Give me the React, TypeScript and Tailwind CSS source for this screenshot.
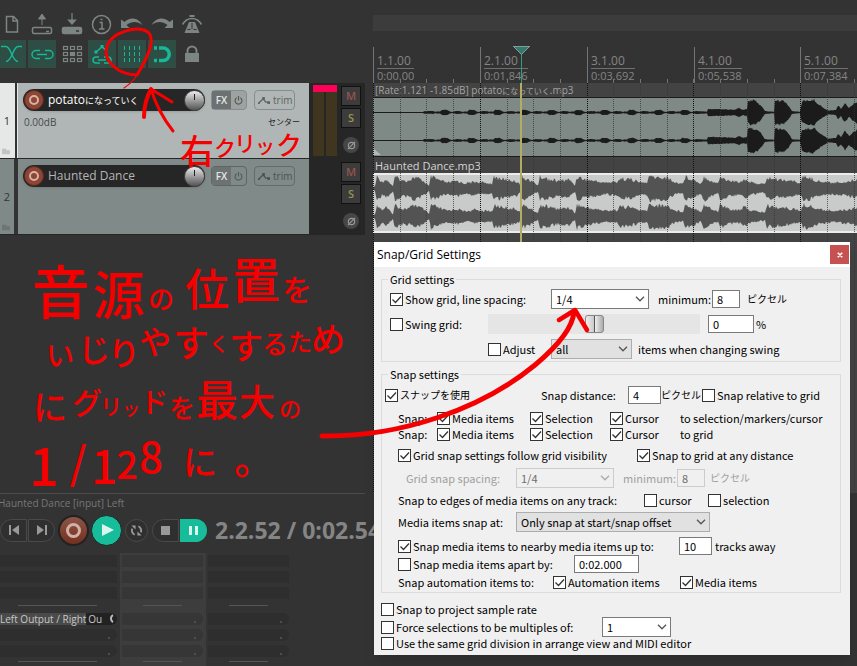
import React from "react";

const ui = "font-['Open_Sans','Noto_Sans_CJK_JP',sans-serif]";
const dlg = "font-['Noto_Sans_CJK_JP',sans-serif]";

/* ---------- waveforms ---------- */

type Pt = [number, number];

const noise = (n: number) => {
  const v = Math.sin(n * 12.9898) * 43758.5453;
  return v - Math.floor(v);
};

function envelope(points: Pt[], x: number) {
  for (let i = 1; i < points.length; i++) {
    const [x0, a0] = points[i - 1];
    const [x1, a1] = points[i];
    if (x <= x1) return a0 + ((a1 - a0) * (x - x0)) / Math.max(1, x1 - x0);
  }
  return points[points.length - 1][1];
}

function wave(points: Pt[], centre: number, rough: number, seed: number) {
  const top: string[] = [];
  const bottom: string[] = [];
  for (let x = 0; x <= 484; x++) {
    const a = envelope(points, x);
    const up = Math.max(0.5, a * (1 - rough * noise(x + seed)));
    const down = Math.max(0.5, a * (1 - rough * noise(x * 3 + seed)));
    top.push(`${x},${(centre - up).toFixed(1)}`);
    bottom.unshift(`${x},${(centre + down).toFixed(1)}`);
  }
  return [...top, ...bottom].join(" ");
}

const quiet: Pt[] = [[0, 0.5], [50, 0.5], [51, 1.5], [60, 1.5]];
for (let i = 0; i < 10; i++) {
  const c = 72 + Math.round(i * 26.7);
  quiet.push([c - 9, 0.6], [c - 8, 1.2], [c - 5, 1], [c - 3, 2.8], [c + 2, 2.8], [c + 5, 1], [c + 7, 0.6], [c + 11, 1.6], [c + 16, 1.4]);
}
const potatoPeaks: Pt[] = [
  ...quiet, [334, 1], [335, 4], [350, 3.6], [362, 3], [366, 5], [370, 3], [374, 4], [375, 12], [378, 14], [383, 12], [388, 8],
  [392, 1.5], [401, 0.8], [402, 13], [411, 13], [416, 7], [419, 1.5], [427, 0.8], [429, 12], [441, 14], [448, 7],
  [455, 2], [463, 3], [465, 8], [468, 4], [472, 11], [476, 5], [480, 9], [484, 12],
];
const dancePeaks: Pt[] = [
  [0, 1], [2, 3], [4, 14], [9, 8], [13, 11], [20, 3], [22, 14], [30, 9], [36, 10], [42, 14], [50, 9], [56, 3], [58, 14],
  [66, 10], [74, 7], [84, 9], [92, 6], [102, 8], [110, 7], [119, 6], [121, 13], [132, 11], [145, 8], [148, 4], [149, 14], [158, 9], [165, 4],
  [167, 14], [177, 11], [186, 9], [196, 11], [202, 4], [204, 14], [212, 11], [222, 9], [232, 7], [244, 8], [247, 12], [258, 11], [268, 7],
  [274, 7], [276, 14], [286, 13], [294, 13], [302, 7], [310, 6], [312, 14], [320, 11], [328, 6], [331, 14], [340, 8], [345, 6], [347, 14],
  [356, 9], [366, 8], [372, 11], [378, 7], [392, 5], [394, 13], [404, 11], [414, 10], [428, 7], [430, 14], [436, 13], [444, 9], [458, 7], [474, 8], [484, 11],
];

/* ---------- toolbar ---------- */

function Tool({ label, active, children }: { label: string; active?: boolean; children: React.ReactNode }) {
  return (
    <button
      aria-label={label}
      className={active ? "size-7 shrink-0 bg-[#2d4d45] text-[#18b795]" : "size-7 shrink-0 text-[#7d8583]"}
    >
      <svg viewBox="0 0 28 28" className="size-7" fill="none" stroke="currentColor" strokeWidth="1.5">
        {children}
      </svg>
    </button>
  );
}

const gridCells = [0, 1, 2].flatMap((r) => [0, 1, 2].map((c) => [c, r]));

function Toolbar() {
  return (
    <div className="-ml-0.5 flex flex-col gap-px pt-[11px]">
      <div className="flex gap-0.5">
        <Tool label="New project">
          <path d="M8.5 5.5h7l4 4v11.5h-11zM15 5.5v4.500h4.500" />
        </Tool>
        <Tool label="Open project">
          <rect x="4.500" y="16.500" width="19" height="6" rx="1.500" />
          <path d="M14 14V5M14 3l-3.500 5h7z" fill="currentColor" strokeWidth="1" />
          <path d="M18 20.500h3" />
        </Tool>
        <Tool label="Save project">
          <rect x="4.500" y="16.500" width="19" height="6" rx="1.500" fill="currentColor" />
          <path d="M14 2v7M14 13l-3.500-4h7z" fill="currentColor" strokeWidth="1.200" />
          <path d="M18 20h3" stroke="#333" />
        </Tool>
        <Tool label="Project settings">
          <circle cx="13.500" cy="13.500" r="9" />
          <path d="M11.500 11.500h2.500v6M11 18h5.500M12.500 8.500h2" />
        </Tool>
        <Tool label="Undo">
          <path d="M3 8.500v8.500h8.500l-3-3c5-4 11-4 16 0c-5-8-13-8-18-3z" fill="currentColor" stroke="none" />
        </Tool>
        <Tool label="Redo">
          <path d="M25 8.500v8.500h-8.500l3-3c-5-4-11-4-16 0c5-8 13-8 18-3z" fill="currentColor" stroke="none" />
        </Tool>
        <Tool label="Metronome">
          <path d="M11 11h6l4.500 11H6.500z" fill="currentColor" stroke="none" />
          <path d="M14 12v6M9.500 18.500h3M15.500 18.500h3" stroke="#333" strokeWidth="1" />
          <path d="M4.500 13.500Q8 7.500 14 7.500T23.500 13.500" />
          <path d="M11.500 5h5" strokeWidth="2" />
        </Tool>
      </div>
      <div className="flex gap-0.5">
        <Tool label="Crossfade" active>
          <path d="M3 6.500h5c5 0 6 15 12 15M24 6.500h-4c-5 0-6 15-12 15" />
        </Tool>
        <Tool label="Grouping" active>
          <path d="M12 10.500H8a4 4 0 0 0 0 8h4M17 10.500h4a4 4 0 0 1 0 8h-4M9 14.500h10" />
        </Tool>
        <Tool label="Ripple edit">
          {gridCells.map(([c, r]) => (
            <rect key={`${c}${r}`} x={5.5 + c * 7} y={6.5 + r * 6} width="4" height="3" fill={c === 1 && r === 1 ? "currentColor" : "none"} strokeWidth="1.200" />
          ))}
        </Tool>
        <Tool label="Envelopes move with items" active>
          <path d="M8 12l6-5l5 4M11 17H8a3 3 0 0 0 0 6h4M16 17h4a3 3 0 0 1 0 6h-4M10 20h8" />
          <path d="M12.500 5h3v3h-3zM6.500 10.500h3v3h-3z" fill="currentColor" stroke="none" />
        </Tool>
        <Tool label="Grid lines" active>
          <path d="M6.500 6v17M11.500 6v17M16.500 6v17M21.500 6v17" strokeWidth="1" strokeDasharray="4 2" />
        </Tool>
        <Tool label="Snap" active>
          <path d="M11 8h4a6 6 0 0 1 0 12.500h-4" strokeWidth="3.500" />
          <path d="M6 8h3M6 20.500h3" strokeWidth="3.500" />
        </Tool>
        <Tool label="Lock">
          <rect x="7" y="13" width="14" height="9" fill="currentColor" stroke="none" />
          <path d="M9.500 13v-2a4.500 4.500 0 0 1 9 0v2" strokeWidth="2" />
        </Tool>
      </div>
    </div>
  );
}

/* ---------- track panel ---------- */

function RecordDot() {
  return (
    <button aria-label="Record arm" className="flex size-5 items-center justify-center rounded-full border border-[#5a2a20] bg-[#8d4636]">
      <span className="size-2.5 rounded-full border-2 border-[#d9b1a6]" />
    </button>
  );
}

function Track({ n, name, selected }: { n: number; name: React.ReactNode; selected?: boolean }) {
  return (
    <div className="flex h-[75px]">
      <div className={`flex w-3.5 flex-col justify-between pt-[31px] pb-[3px] text-center text-[11px] leading-[14px] text-[#333] ${selected ? "bg-[#e6e8e8]" : "bg-[#7f8987]"}`}>
        <span>{n}</span>
        <svg viewBox="0 0 10 7" className="ml-0.5 h-[7px] w-2" fill={selected ? "#c2c4c4" : "#6d7674"}>
          <path d="M0 0h5l1 2h4v5H0z" />
        </svg>
      </div>
      <div className={`w-1 border-x bg-[#333] ${selected ? "border-[#e6e8e8]" : "border-[#333]"}`} />
      <div className={`flex min-w-0 flex-1 flex-col pt-1.5 pr-[9px] pl-[5px] ${selected ? "bg-[#b0b6b5]" : "bg-[#808a88]"}`}>
        <div className="flex items-center">
          <div className="flex h-[22px] w-[182px] items-center rounded-full bg-[#262626] pl-px shadow-sm">
            <RecordDot />
            <span className={`ml-1 flex-1 text-[12px] leading-4 whitespace-nowrap ${selected ? "text-white" : "text-[#b5b5b5]"}`}>{name}</span>
            <span className="flex size-[21px] justify-center rounded-full border border-[#444] bg-linear-to-b from-[#eee] to-[#555] pt-[3px]">
              <span className="h-1.5 w-px bg-[#222]" />
            </span>
          </div>
          <div className={`ml-1.5 flex h-5 w-9 rounded-sm border text-[10px] ${selected ? "border-[#858c8b] bg-[#9ca3a1]" : "border-[#5e6564]"}`}>
            <button className="w-[19px] bg-[#6b7271] font-semibold text-[#e4e6e6]">FX</button>
            <button aria-label="Bypass effects" className="flex flex-1 items-center justify-center text-[#555c5a]">
              <svg viewBox="0 0 10 10" className="size-[9px]" fill="none" stroke="currentColor" strokeWidth="1.300">
                <path d="M3 2a3.800 3.800 0 1 0 4 0M5 0v5" />
              </svg>
            </button>
          </div>
          <button className={`ml-[7px] flex h-5 w-[41px] items-center rounded-sm border pl-[3px] text-[10px] leading-4 ${selected ? "border-[#858c8b] text-[#5d6463]" : "border-[#636b69] text-[#4c5352]"}`}>
            <svg viewBox="0 0 14 10" className="mr-[3px] h-[9px] w-3 shrink-0" fill="none" stroke="currentColor" strokeWidth="1.500">
              <path d="M1 8l5-5l3 4h4" />
              <path d="M0 7h2v2H0zM5 1h3v3H5zM11 6h3v3h-3z" fill="currentColor" stroke="none" />
            </svg>
            trim
          </button>
        </div>
        {selected && (
          <div className="mt-[3px] flex justify-between pl-px text-[10px] leading-4 text-[#444b4a]">
            <span>0.00dB</span>
            <span className="text-[8px] text-[#222]">センター</span>
          </div>
        )}
      </div>
      <div className="flex w-14 bg-[#262626] pl-1">
        <div className="flex w-6 flex-col pt-0.5 pb-0.5">
          {selected && (
            <>
              <div className="h-[7px] bg-[#ff0059]" />
              <div className="flex flex-1 gap-0.5">
                <div className="flex-1 bg-[#40361f]" />
                <div className="flex-1 bg-[#40361f]" />
              </div>
            </>
          )}
        </div>
        <div className="ml-1 flex w-5 flex-col items-center pt-[3px]">
          <button className="h-5 w-5 border border-[#111] bg-[#3c3c3c] text-[11px] leading-4 font-semibold text-[#95534f]">M</button>
          <button className="mt-0.5 h-5 w-5 border border-[#111] bg-[#3c3c3c] text-[11px] leading-4 font-semibold text-[#98964c]">S</button>
          <button aria-label="Phase" className="mt-[9px] flex size-4 items-center justify-center rounded-full bg-[#464646] text-[#999]">
            <svg viewBox="0 0 10 10" className="size-[9px]" fill="none" stroke="currentColor" strokeWidth="1.300">
              <circle cx="5" cy="5" r="3.500" />
              <path d="M1 9l8-8" />
            </svg>
          </button>
        </div>
      </div>
    </div>
  );
}

/* ---------- arrange view ---------- */

const bars = [
  { bar: "1.1.00", time: "0:00.00", w: "w-[107px]" },
  { bar: "2.1.00", time: "0:01.846", w: "w-[107px]" },
  { bar: "3.1.00", time: "0:03.692", w: "w-[107px]" },
  { bar: "4.1.00", time: "0:05.538", w: "w-[106px]" },
  { bar: "5.1.00", time: "0:07.384", w: "w-[106px]" },
];
const beats = Array.from({ length: 20 }, (_, i) => Math.round(i * 26.7));

function Arrange() {
  return (
    <div className="relative flex min-w-0 flex-1 flex-col overflow-hidden bg-[#434343]">
      <div className="h-[15px] bg-[#333]" />
      <div className="h-4 bg-[#3c3c3c]" />
      <div className="flex h-[52px] bg-[#333] pt-4">
        {bars.map((b) => (
          <div key={b.bar} className={`h-9 shrink-0 border-l border-[#747474] pl-[3px] text-[#858585] ${b.w}`}>
            <div className="inline-flex flex-col pr-px">
              <span className="border-b border-[#6f6f6f] text-[12px] leading-[14px]">{b.bar}</span>
              <span className="text-[11px] leading-[14px]">{b.time}</span>
            </div>
          </div>
        ))}
      </div>
      <div className="h-[14px] pl-0.5 text-[10px] leading-[14px] whitespace-nowrap text-[#a2a2a2]">
        [Rate:1.121 -1.85dB] potato<span className="text-[8px]">になっていく</span>.mp3
      </div>
      <div className="h-[60px] border-y border-[#1c1c1c] bg-[#7f8a87]">
        <svg width="484" height="58" className="max-w-none">
          <path d="M0 57V50l8 7z" fill="#b4b9b8" />
          <polygon points={wave(potatoPeaks, 14.5, 0.2, 1)} fill="#1b1b1b" />
          <polygon points={wave(potatoPeaks, 42.5, 0.2, 7)} fill="#1b1b1b" />
        </svg>
      </div>
      <div className="h-4 pl-0.5 text-[11px] leading-[18px] whitespace-nowrap text-[#d4d4d4]">Haunted Dance.mp3</div>
      <div className="h-[60px] border-y-2 border-[#ececec] bg-[#c9cbcb]">
        <svg width="484" height="56" className="max-w-none">
          <polygon points={wave(dancePeaks, 13.5, 0.35, 3)} fill="#535353" />
          <polygon points={wave(dancePeaks, 41.5, 0.35, 11)} fill="#535353" />
        </svg>
      </div>
      <div className="flex-1" />
      <svg className="pointer-events-none absolute inset-0 h-full w-full" shapeRendering="crispEdges">
        {beats.map((x, i) => (
          <g key={x}>
            <line x1={x + 0.5} x2={x + 0.5} y1="79" y2="83" stroke="#747474" />
            <line x1={x + 0.5} x2={x + 0.5} y1="83" y2="100%" stroke={i % 4 === 0 ? "#111" : "#333"} strokeOpacity={i % 4 === 0 ? 1 : 0.75} strokeDasharray="1 1" />
          </g>
        ))}
        <path d="M148.500 54v29" stroke="#2f9c86" />
        <path d="M148 83v160" stroke="#b3ad62" strokeWidth="2" />
        <path d="M140.500 46.500h16l-8 8z" fill="#36786c" stroke="#7f9f99" />
      </svg>
    </div>
  );
}

/* ---------- transport and mixer ---------- */

function Transport() {
  const side = "flex h-[23px] w-[27px] shrink-0 items-center justify-center border border-[#4a4a4a] bg-[#2f2f2f] text-[#999]";
  return (
    <div className="flex h-[34px] items-center">
      <div className="flex items-center">
        <button aria-label="Go to start" className={`${side} rounded-l-full`}>
          <svg viewBox="0 0 12 10" className="h-2.5 w-3" fill="currentColor"><path d="M1 0h2v10H1zM11 0v10L4 5z" /></svg>
        </button>
        <button aria-label="Go to end" className={`${side} ml-px rounded-r-full`}>
          <svg viewBox="0 0 12 10" className="h-2.5 w-3" fill="currentColor"><path d="M9 0h2v10H9zM1 0v10l7-5z" /></svg>
        </button>
        <button aria-label="Record" className="ml-[3px] flex size-[31px] shrink-0 items-center justify-center rounded-full border-2 border-[#222] bg-linear-to-b from-[#8c5548] to-[#74301f]">
          <span className="size-[15px] rounded-full border-3 border-[#d3b0a6]" />
        </button>
        <button aria-label="Play" className="ml-0.5 flex size-[31px] shrink-0 items-center justify-center rounded-full border border-[#1e2a27] bg-[#17bd9a] text-[#d8f5ee]">
          <svg viewBox="0 0 12 12" className="ml-0.5 size-3" fill="currentColor"><path d="M0 0v12l12-6z" /></svg>
        </button>
        <button aria-label="Repeat" className="ml-[3px] flex size-[23px] shrink-0 items-center justify-center rounded-full border border-[#4a4a4a] bg-[#2f2f2f] text-[#999]">
          <svg viewBox="0 0 14 14" className="size-[13px]" fill="none" stroke="currentColor" strokeWidth="2">
            <path d="M5 11.600A5 5 0 0 1 2.400 5M9 2.400A5 5 0 0 1 11.600 9" />
            <path d="M6 1.500H1.500L6 6zM8 12.500h4.500L8 8z" fill="currentColor" stroke="none" />
          </svg>
        </button>
        <button aria-label="Stop" className={`${side} ml-1 rounded-l-full`}>
          <span className="size-[9px] bg-[#999]" />
        </button>
        <button aria-label="Pause" className="ml-px flex h-[23px] w-[27px] shrink-0 items-center justify-center gap-[3px] rounded-r-full bg-[#17bd9a]">
          <span className="h-[9px] w-[3px] bg-[#d8f5ee]" />
          <span className="h-[9px] w-[3px] bg-[#d8f5ee]" />
        </button>
      </div>
      <span className="ml-2 text-[23px] leading-8 font-bold whitespace-nowrap text-[#858585]">2.2.52 / 0:02.549</span>
    </div>
  );
}

function Strip({ wide, lit, output }: { wide?: boolean; lit?: boolean; output?: boolean }) {
  const slot = lit ? "bg-[#363636]" : "bg-[#2e2e2e]";
  const sends = [0, 1, 2];
  return (
    <div className={`flex flex-col pt-0.5 pr-[3px] ${wide ? "w-[120px]" : "w-[86px] pl-0.5"} ${lit ? "bg-[#3d3d3d]" : ""}`}>
      <div className="flex flex-col gap-1">
        {sends.map((i) => (
          <div key={i} className={`h-3 ${slot}`} />
        ))}
      </div>
      <div className={`mt-1.5 h-px bg-[#555] ${wide ? "mr-5 ml-[18px]" : "mx-[21px]"}`} />
      <div className="mt-[7px] flex flex-col gap-1">
        {sends.map((i) =>
          output && i === 0 ? (
            <div key={i} className="flex h-3 items-center rounded-r-full bg-[#222] text-[10px] leading-3 whitespace-nowrap text-[#c8c8c8]">
              <span className="bg-[#4a4a4a]">Left Output / Right</span>
              <span className="ml-0.5">Ou</span>
              <svg viewBox="0 0 8 10" className="ml-[5px] h-2.5 w-2" fill="none" stroke="#bbb" strokeWidth="2"><path d="M6 1a4 4 0 0 0 0 7" /></svg>
            </div>
          ) : (
            <div key={i} className={`flex h-3 items-end justify-end rounded-r-full pr-[7px] pb-0.5 ${slot}`}>
              <span className="size-0.5 bg-[#4d4d4d]" />
            </div>
          ),
        )}
      </div>
      <div className={`mt-1 mb-1 h-px bg-[#555] ${wide ? "mr-5 ml-[18px]" : "mx-[21px]"}`} />
    </div>
  );
}

/* ---------- dialog ---------- */

function Check({ label, checked, w = "", small }: { label: string; checked?: boolean; w?: string; small?: boolean }) {
  return (
    <label className={`flex shrink-0 items-center gap-0.5 ${small ? "text-[10px]" : ""} ${w}`}>
      <span className="grid shrink-0">
        <input type="checkbox" defaultChecked={checked} className="peer col-start-1 row-start-1 size-[13px] appearance-none border border-[#333] bg-white" />
        <svg viewBox="0 0 13 13" className="pointer-events-none invisible col-start-1 row-start-1 size-[13px] peer-checked:visible" fill="none" stroke="#333" strokeWidth="1.300">
          <path d="M2.500 6.500l3 3L11 3.500" />
        </svg>
      </span>
      {label}
    </label>
  );
}

function Select({ name, value, w, look, disabled }: { name: string; value: string; w: string; look: string; disabled?: boolean }) {
  return (
    <span className={`grid h-5 shrink-0 ${w}`}>
      <select aria-label={name} disabled={disabled} className={`col-start-1 row-start-1 h-5 w-full appearance-none border pl-1 text-[11px] leading-4 ${look}`}>
        <option>{value}</option>
      </select>
      <svg viewBox="0 0 10 6" className="pointer-events-none col-start-1 row-start-1 mr-1 h-1.5 w-2.5 self-center justify-self-end" fill="none" stroke={disabled ? "#aaa" : "#555"} strokeWidth="1.300">
        <path d="M1 .8l4 4l4-4" />
      </svg>
    </span>
  );
}
const white = "border-[#7a7a7a] bg-white";
const grey = "border-[#adadad] bg-[#e1e1e1]";

function Field({ name, value, w, disabled }: { name: string; value: string; w: string; disabled?: boolean }) {
  return (
    <input
      aria-label={name}
      defaultValue={value}
      disabled={disabled}
      className={`h-[18px] shrink-0 border pl-1 text-[11px] leading-4 ${w} ${disabled ? "border-[#ccc] bg-[#f0f0f0] text-[#6d6d6d]" : "border-[#7a7a7a] bg-white"}`}
    />
  );
}

function Dialog() {
  const row = "flex h-5 items-center";
  const short = "flex h-4 items-center";
  return (
    <div role="dialog" aria-label="Snap/Grid Settings" className={`absolute top-[242px] left-[374px] w-[476px] bg-[#f0f0f0] pb-1 text-[11px] leading-3 whitespace-nowrap text-black shadow-lg ${dlg}`}>
      <div className="flex h-[25px] items-center justify-between bg-white pr-px pl-[3px]">
        <h1 className={`text-[12px] leading-4 ${ui}`}>Snap/Grid Settings</h1>
        <button aria-label="Close" className="flex size-[19px] items-center justify-center bg-[#c75050] text-white">
          <svg viewBox="0 0 8 8" className="size-1.5" stroke="currentColor" strokeWidth="2"><path d="M1 1l6 6M7 1l-6 6" /></svg>
        </button>
      </div>

      <div className="px-[7px] pt-1.5">
        <fieldset className="mr-0.5 border border-[#dcdcdc] pb-0.5 pl-2">
          <legend className="-ml-0.5 px-0.5">Grid settings</legend>
          <div className="mt-1 flex flex-col gap-[5px]">
            <div className={row}>
              <Check label="Show grid, line spacing:" checked w="w-[161px]" />
              <Select name="Line spacing" value="1/4" w="w-[98px]" look={white} />
              <span className="ml-[9px] w-[54px]">minimum:</span>
              <Field name="Minimum pixels" value="8" w="w-7" />
              <span className="ml-[7px] text-[10px]">ピクセル</span>
            </div>
            <div className={row}>
              <Check label="Swing grid:" w="w-[98px]" />
              <span className="grid h-5 w-[212px] shrink-0 items-center bg-[#e5e5e5]">
                <input type="range" aria-label="Swing amount" className="h-5 w-full appearance-none bg-transparent [&::-webkit-slider-thumb]:h-[18px] [&::-webkit-slider-thumb]:w-[19px] [&::-webkit-slider-thumb]:appearance-none [&::-webkit-slider-thumb]:rounded-[3px] [&::-webkit-slider-thumb]:border [&::-webkit-slider-thumb]:border-[#888] [&::-webkit-slider-thumb]:bg-[linear-gradient(to_right,#eee,#ccc_45%,#555_46%,#555_52%,#eee_53%,#aaa)]" />
              </span>
              <span className="ml-2"><Field name="Swing percent" value="0" w="w-[46px]" /></span>
              <span className="ml-0.5">%</span>
            </div>
            <div className={`${row} pl-[98px]`}>
              <Check label="Adjust" w="w-[63px]" />
              <Select name="Adjust items" value="all" w="w-[81px]" look={grey} />
              <span className="ml-1.5">items when changing swing</span>
            </div>
          </div>
        </fieldset>

        <fieldset className="mt-1.5 mr-0.5 border border-[#dcdcdc] pb-0.5 pl-4">
          <legend className="-ml-2.5 px-0.5">Snap settings</legend>
          <div className={`mt-[5px] -ml-[13px] ${row}`}>
            <Check label="スナップを使用" checked w="w-[156px]" small />
            <span className="w-[87px]">Snap distance:</span>
            <Field name="Snap distance" value="4" w="w-[33px]" />
            <span className="w-[41px] text-[10px]">ピクセル</span>
            <Check label="Snap relative to grid" />
          </div>
          <div className="mt-[5px]">
            {["to selection/markers/cursor", "to grid"].map((target) => (
              <div key={target} className={short}>
                <span className="w-[39px]">Snap:</span>
                <Check label="Media items" checked w="w-[93px]" />
                <Check label="Selection" checked w="w-20" />
                <Check label="Cursor" checked w="w-[70px]" />
                <span>{target}</span>
              </div>
            ))}
          </div>
          <div className={`mt-[3px] ${row}`}>
            <Check label="Grid snap settings follow grid visibility" checked w="w-[239px]" />
            <Check label="Snap to grid at any distance" checked />
          </div>
          <div className={`mt-[3px] pl-2 text-[#a0a0a0] ${row}`}>
            <span className="w-[110px]">Grid snap spacing:</span>
            <Select name="Grid snap spacing" value="1/4" w="w-[98px]" look="border-[#ccc] bg-[#f0f0f0] text-[#6d6d6d]" disabled />
            <span className="ml-[9px] w-[54px]">minimum:</span>
            <Field name="Minimum snap pixels" value="8" w="w-7" disabled />
            <span className="ml-[5px] text-[10px]">ピクセル</span>
          </div>
          <div className={`mt-0.5 ${row}`}>
            <span className="w-[246px]">Snap to edges of media items on any track:</span>
            <Check label="cursor" w="w-16" />
            <Check label="selection" />
          </div>
          <div className={`mt-0.5 ${row}`}>
            <span className="w-[118px]">Media items snap at:</span>
            <Select name="Media items snap at" value="Only snap at start/snap offset" w="w-[194px]" look={grey} />
          </div>
          <div className={`mt-1 ${row}`}>
            <Check label="Snap media items to nearby media items up to:" checked w="w-[281px]" />
            <Field name="Tracks away" value="10" w="w-[33px]" />
            <span className="ml-[3px]">tracks away</span>
          </div>
          <div className={short}>
            <Check label="Snap media items apart by:" w="w-[176px]" />
            <Field name="Apart by" value="0:02.000" w="w-[65px]" />
          </div>
          <div className={`mt-0.5 ${short}`}>
            <span className="w-[155px]">Snap automation items to:</span>
            <Check label="Automation items" checked w="w-[127px]" />
            <Check label="Media items" checked />
          </div>
        </fieldset>

        <div className="mt-2">
          <div className={short}>
            <Check label="Snap to project sample rate" />
          </div>
          <div className={`mt-0.5 ${short}`}>
            <Check label="Force selections to be multiples of:" w="w-[221px]" />
            <Select name="Multiples of" value="1" w="w-[69px]" look={white} />
          </div>
          <div className={short}>
            <Check label="Use the same grid division in arrange view and MIDI editor" />
          </div>
        </div>
      </div>
    </div>
  );
}

/* ---------- red pen notes: glyph, centre x, centre y, size ---------- */

type Glyph = [string, number, number, number];
const notes: Glyph[][] = [
  [["右", 197, 151, 34], ["ク", 225, 148, 22], ["リ", 245, 144, 22], ["ッ", 265, 147, 20], ["ク", 289, 145, 26]],
  [["音", 61, 293, 58], ["源", 119, 296, 52], ["の", 161, 299, 26], ["位", 207, 290, 44], ["置", 256, 280, 48], ["を", 297, 290, 30]],
  [["い", 60, 356, 28], ["じ", 94, 350, 32], ["り", 124, 353, 32], ["や", 155, 342, 32], ["す", 191, 344, 36], ["く", 219, 345, 20], ["す", 246, 346, 34], ["る", 275, 344, 26], ["た", 300, 342, 24], ["め", 328, 339, 34]],
  [["に", 50, 407, 34], ["グ", 87, 403, 30], ["リ", 111, 407, 22], ["ッ", 131, 409, 18], ["ド", 154, 403, 28], ["を", 182, 408, 26], ["最", 217, 400, 42], ["大", 257, 403, 36], ["の", 290, 409, 22]],
  [["1", 44, 467, 52], ["/", 78, 463, 44], ["1", 104, 467, 46], ["2", 127, 465, 38], ["8", 151, 457, 42], ["に", 200, 462, 34], ["。", 254, 459, 40]],
];

function Annotations() {
  return (
    <svg className="pointer-events-none absolute inset-0 h-full w-full" fill="none" stroke="#f50000" strokeLinecap="round" strokeLinejoin="round">
      <path d="M137 75C118 75 102 60 107 46C112 32 137 25 148 32C157 40 145 62 137 75" strokeWidth="3" />
      <path d="M137 75Q133 82 124 88" strokeWidth="1.200" />
      <path d="M151 89Q144 102 144 117" strokeWidth="4" />
      <path d="M151 89Q158 112 173 131M151 89L172 102" strokeWidth="3" />
      <path d="M322 436C400 437 480 410 535 365Q572 334 574 312" strokeWidth="5" />
      <path d="M559 320L575 310L587 330" strokeWidth="4.500" />
      {notes.map((line, i) => (
        <text key={i} fill="#f50000" stroke="none" textAnchor="middle" className="font-['Noto_Sans_CJK_JP',sans-serif] font-medium">
          {line.map(([t, x, y, size]) => (
            <tspan key={x} x={x} y={y + Math.round(size * 0.37)} fontSize={size}>{t}</tspan>
          ))}
        </text>
      ))}
    </svg>
  );
}

export default function App() {
  return (
    <div className={`relative flex h-screen w-full flex-col overflow-hidden bg-[#333] ${ui}`}>
      <div className="flex min-h-0 flex-1">
        <div className="w-[373px] shrink-0">
          <Toolbar />
          <div className="mt-[15px] mr-2 flex flex-col gap-px bg-[#262626] pb-px">
            <Track n={1} name={<>potato<span className="text-[9px]">になっていく</span></>} selected />
            <Track n={2} name="Haunted Dance" />
          </div>
        </div>
        <Arrange />
      </div>
      <div className="w-[373px]">
        <div className="mr-2 h-px bg-[#4c4c4c]" />
        <div className="-ml-0.5 h-4 pt-px text-[10px] leading-4 whitespace-nowrap text-[#777]">Haunted Dance [input] Left</div>
        <div className="pt-[3px]"><Transport /></div>
        <div className="flex pt-1.5">
          <Strip wide output />
          <Strip lit />
          <Strip />
        </div>
      </div>
      <Dialog />
      <Annotations />
    </div>
  );
}
